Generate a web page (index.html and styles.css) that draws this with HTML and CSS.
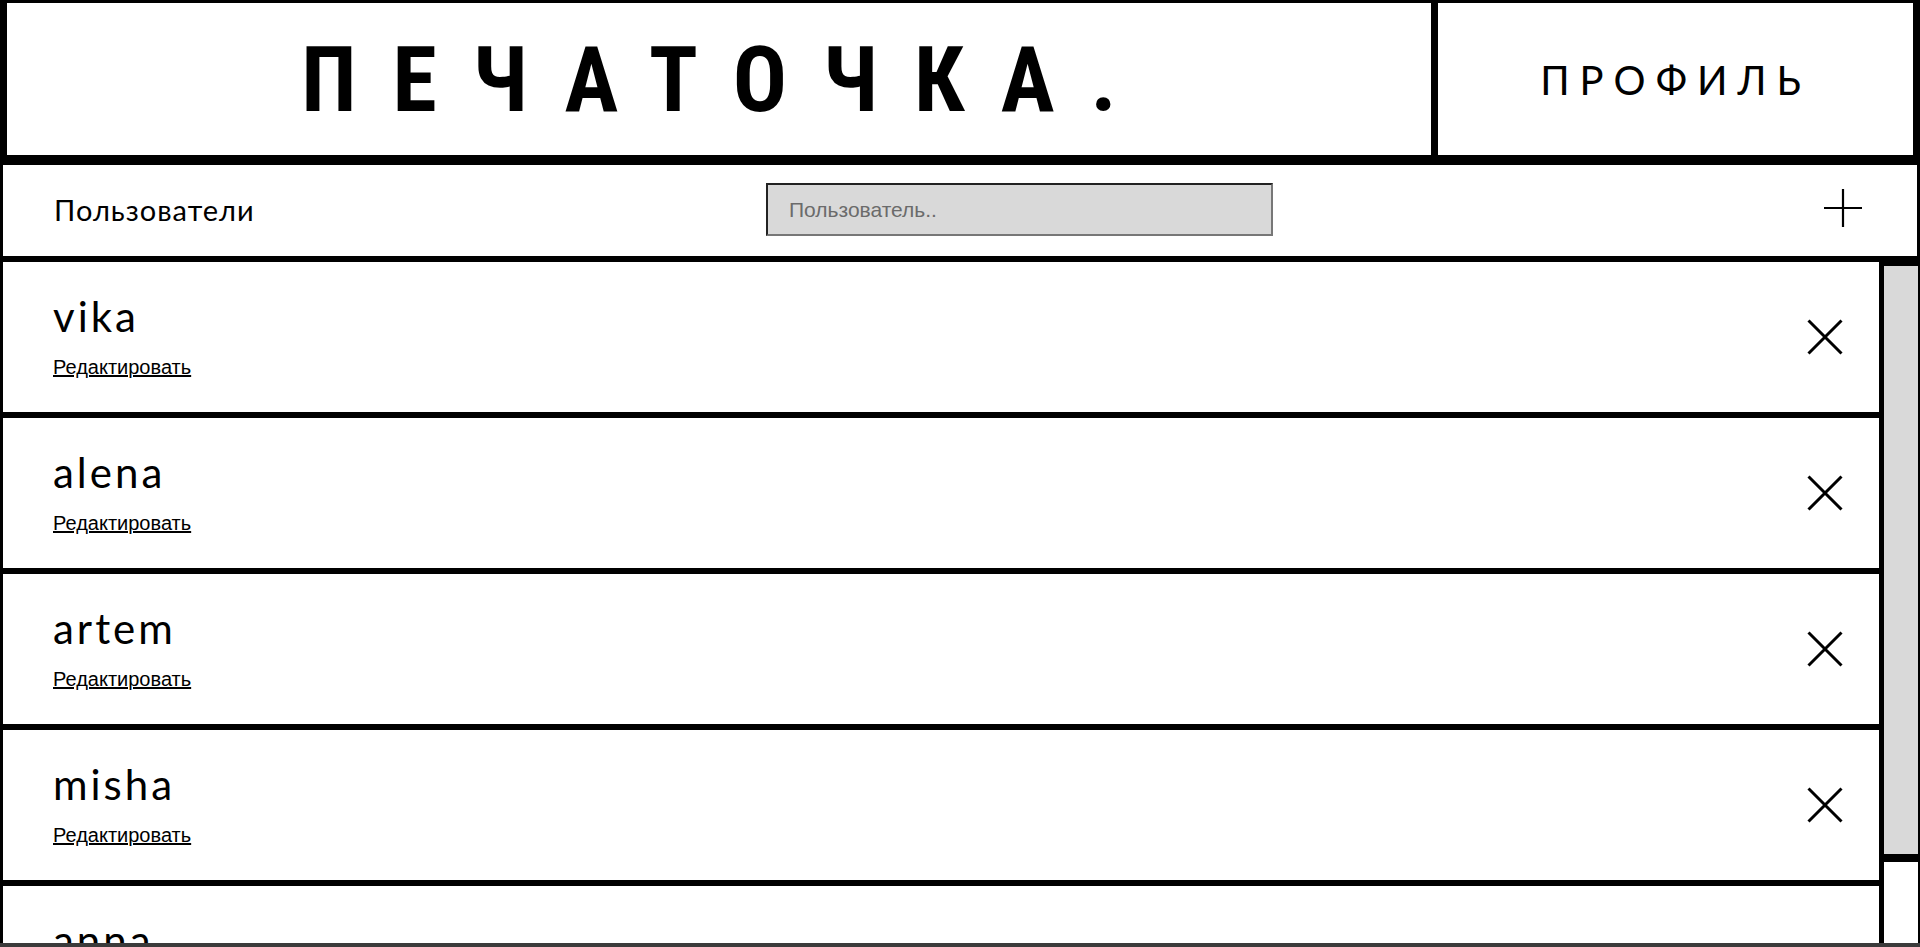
FILE: index.html
```html
<!DOCTYPE html>
<html lang="ru">
<head>
<meta charset="utf-8">
<title>Печаточка — Пользователи</title>
<link rel="stylesheet" href="styles.css">
</head>
<body>
<div class="page">
  <header class="site-header">
    <div class="brand">ПЕЧАТОЧКА.</div>
    <a class="profile" href="#">ПРОФИЛЬ</a>
  </header>
  <section class="users">
    <div class="toolbar">
      <h2 class="toolbar-title">Пользователи</h2>
      <input class="search" type="text" placeholder="Пользователь..">
      <button class="add-btn" type="button" aria-label="Добавить">
        <svg width="40" height="40" viewBox="0 0 40 40"><path d="M20 1V39M1 20H39" stroke="#000" stroke-width="2.2" fill="none"/></svg>
      </button>
    </div>
    <div class="list-wrap">
      <ul class="user-list">
        <li class="user">
          <div class="user-info"><span class="user-name">vika</span><a class="edit" href="#">Редактировать</a></div>
          <button class="del" type="button" aria-label="Удалить"><svg width="36" height="36" viewBox="0 0 36 36"><path d="M1.5 1.5L34.5 34.5M34.5 1.5L1.5 34.5" stroke="#000" stroke-width="3" fill="none"/></svg></button>
        </li>
        <li class="user">
          <div class="user-info"><span class="user-name">alena</span><a class="edit" href="#">Редактировать</a></div>
          <button class="del" type="button" aria-label="Удалить"><svg width="36" height="36" viewBox="0 0 36 36"><path d="M1.5 1.5L34.5 34.5M34.5 1.5L1.5 34.5" stroke="#000" stroke-width="3" fill="none"/></svg></button>
        </li>
        <li class="user">
          <div class="user-info"><span class="user-name">artem</span><a class="edit" href="#">Редактировать</a></div>
          <button class="del" type="button" aria-label="Удалить"><svg width="36" height="36" viewBox="0 0 36 36"><path d="M1.5 1.5L34.5 34.5M34.5 1.5L1.5 34.5" stroke="#000" stroke-width="3" fill="none"/></svg></button>
        </li>
        <li class="user">
          <div class="user-info"><span class="user-name">misha</span><a class="edit" href="#">Редактировать</a></div>
          <button class="del" type="button" aria-label="Удалить"><svg width="36" height="36" viewBox="0 0 36 36"><path d="M1.5 1.5L34.5 34.5M34.5 1.5L1.5 34.5" stroke="#000" stroke-width="3" fill="none"/></svg></button>
        </li>
        <li class="user">
          <div class="user-info"><span class="user-name">anna</span><a class="edit" href="#">Редактировать</a></div>
          <button class="del" type="button" aria-label="Удалить"><svg width="36" height="36" viewBox="0 0 36 36"><path d="M1.5 1.5L34.5 34.5M34.5 1.5L1.5 34.5" stroke="#000" stroke-width="3" fill="none"/></svg></button>
        </li>
      </ul>
      <div class="scrollbar"><div class="thumb"></div></div>
    </div>
  </section>
  <div class="hbar"></div>
</div>
</body>
</html>
```
FILE: styles.css
```css
* { box-sizing: border-box; }
html, body { margin: 0; padding: 0; background: #fff; }
body { width: 1920px; height: 947px; overflow: hidden; font-family: "Lato", "Liberation Sans", sans-serif; color: #000; }
.page { display: flex; flex-direction: column; height: 947px; }

.site-header {
  display: grid;
  grid-template-columns: 1fr 482px;
  height: 162px;
  border-style: solid;
  border-color: #000;
  border-width: 3px 7px 7px 7px;
}
.brand {
  display: flex; align-items: center; justify-content: center;
  font-family: "Liberation Sans Narrow", "Roboto Condensed", "DejaVu Sans Condensed", "Liberation Sans", sans-serif;
  font-weight: 700;
  font-size: 90px;
  letter-spacing: 36px;
  padding-top: 2px;
  padding-left: 16px;
}
.profile {
  display: flex; align-items: center; justify-content: center;
  border-left: 7px solid #000;
  color: #000; text-decoration: none;
  font-family: "Lato", sans-serif;
  font-size: 40px;
  letter-spacing: 10px;
  padding-top: 2px;
}

.users { display: flex; flex-direction: column; flex: 1; min-height: 0; }
.toolbar {
  display: flex; align-items: center;
  height: 97px;
  border: 3px solid #000;
  padding: 0 54px 2px 51px;
}
.toolbar-title { margin: 0; font-weight: 400; font-size: 29px; letter-spacing: 1px; flex: 0 0 712px; }
.search {
  width: 507px; height: 53px;
  background: #d9d9d9;
  border: 2px solid; border-color: #222 #777 #777 #222;
  font-family: "Liberation Sans", Arial, sans-serif; font-size: 21px;
  padding: 0 0 0 21px; outline: none;
}
.search::placeholder { color: #6b6b6b; }
.add-btn { margin-left: auto; margin-top: -4px; padding: 0; border: 0; background: none; display: flex; }

.list-wrap { flex: 1; display: flex; min-height: 0; overflow: hidden; }
.user-list { list-style: none; margin: 0; padding: 0; flex: 1; overflow: hidden; }
.user {
  display: flex; align-items: center; justify-content: space-between;
  height: 156px;
  border: 3px solid #000;
  padding: 0 36px 0 50px;
}
.user-info { display: flex; flex-direction: column; padding-bottom: 5px; }
.user-name { font-size: 42px; line-height: 50px; letter-spacing: 3px; }
.edit { margin-top: 15px; font-family: "Liberation Sans", Arial, sans-serif; font-size: 20px; line-height: 23px; color: #000; }
.del { padding: 0; border: 0; background: none; display: flex; }

.scrollbar {
  width: 38px; flex: none;
  border-left: 2px solid #000;
  border-right: 2px solid #000;
  background: #fff;
}
.thumb {
  height: 603px;
  background: #d9d9d9;
  border-top: 7px solid #000;
  border-bottom: 8px solid #000;
}
.hbar { height: 4px; background: #3b3b3b; flex: none; }
```
